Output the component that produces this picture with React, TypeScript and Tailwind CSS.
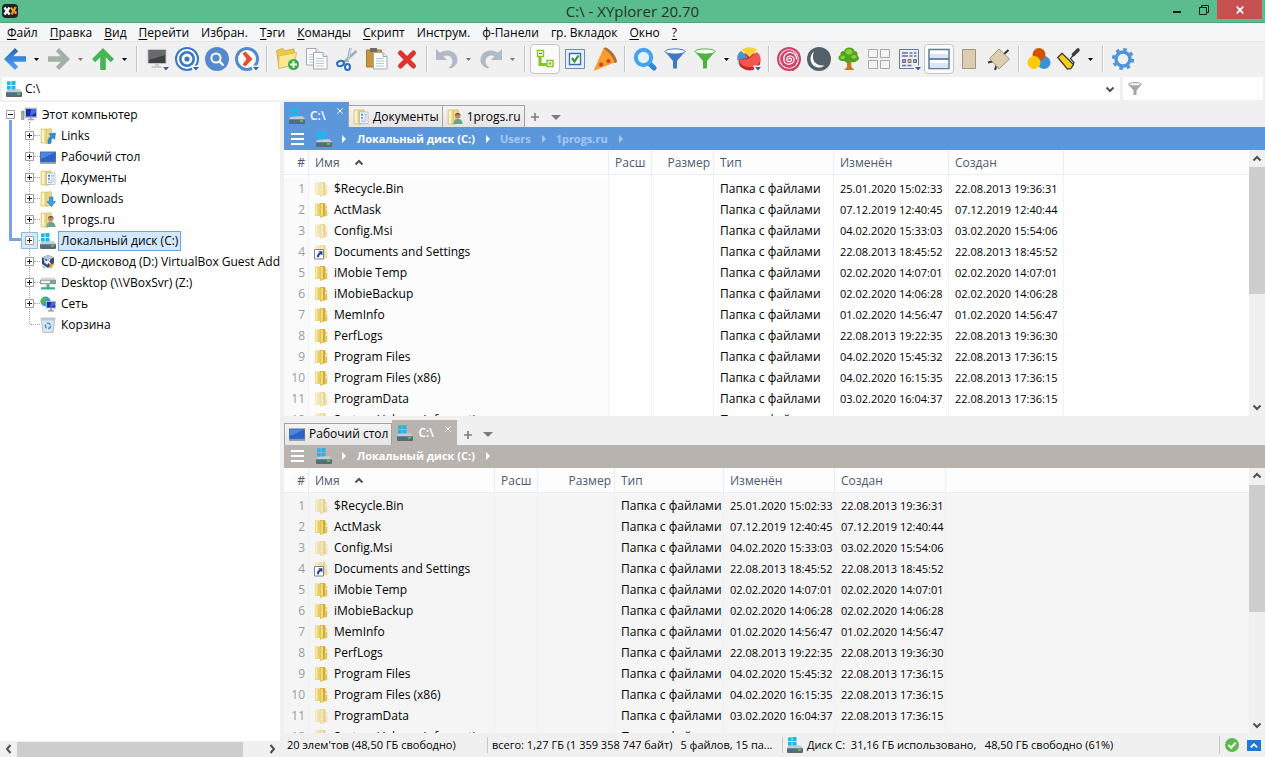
import { useState, type ReactNode } from 'react'
import clsx from 'clsx'

/* ------------------------------------------------------------------ */
/* Data                                                                */
/* ------------------------------------------------------------------ */

interface FileRow {
  name: string
  modified: string
  created: string
  kind?: 'dim' | 'link'
}

const files: FileRow[] = [
  { name: '$Recycle.Bin', modified: '25.01.2020 15:02:33', created: '22.08.2013 19:36:31', kind: 'dim' },
  { name: 'ActMask', modified: '07.12.2019 12:40:45', created: '07.12.2019 12:40:44' },
  { name: 'Config.Msi', modified: '04.02.2020 15:33:03', created: '03.02.2020 15:54:06', kind: 'dim' },
  { name: 'Documents and Settings', modified: '22.08.2013 18:45:52', created: '22.08.2013 18:45:52', kind: 'link' },
  { name: 'iMobie Temp', modified: '02.02.2020 14:07:01', created: '02.02.2020 14:07:01' },
  { name: 'iMobieBackup', modified: '02.02.2020 14:06:28', created: '02.02.2020 14:06:28' },
  { name: 'MemInfo', modified: '01.02.2020 14:56:47', created: '01.02.2020 14:56:47' },
  { name: 'PerfLogs', modified: '22.08.2013 19:22:35', created: '22.08.2013 19:36:30' },
  { name: 'Program Files', modified: '04.02.2020 15:45:32', created: '22.08.2013 17:36:15' },
  { name: 'Program Files (x86)', modified: '04.02.2020 16:15:35', created: '22.08.2013 17:36:15' },
  { name: 'ProgramData', modified: '03.02.2020 16:04:37', created: '22.08.2013 17:36:15', kind: 'dim' },
  { name: 'System Volume Information', modified: '04.02.2020 15:45:31', created: '20.11.2019 16:30:45', kind: 'dim' },
]

// [text before, underlined letter, text after]
const menu: [string, string, string][] = [
  ['', 'Ф', 'айл'],
  ['', 'П', 'равка'],
  ['', 'В', 'ид'],
  ['', 'П', 'ерейти'],
  ['Избран.', '', ''],
  ['', 'Т', 'эги'],
  ['', 'К', 'оманды'],
  ['', 'С', 'крипт'],
  ['Инструм.', '', ''],
  ['ф-Панели', '', ''],
  ['гр. Вкладок', '', ''],
  ['', 'О', 'кно'],
  ['', '?', ''],
]

/* ------------------------------------------------------------------ */
/* Small icons (16px)                                                  */
/* ------------------------------------------------------------------ */

function Svg16({ children }: { children: ReactNode }) {
  return (
    <svg viewBox="0 0 16 16" className="size-4 shrink-0" aria-hidden="true">
      {children}
    </svg>
  )
}

function FolderShape() {
  return (
    <>
      <path d="M1 1h6v14H1z" fill="#f0df98" stroke="#d6c070" strokeWidth=".6" />
      <path d="M6 1.500L10.500.500l1 1V14L6 15.800z" fill="#ead588" stroke="#d2b862" strokeWidth=".6" />
      <path d="M2 2h2v12H2z" fill="#fbf4cf" />
    </>
  )
}

function FolderIcon({ kind }: { kind?: 'dim' | 'link' }) {
  return (
    <Svg16>
      <g opacity={kind ? 0.5 : 1}>
        <path d="M1 1.500h5.500V14H1z" fill="#e9cd68" />
        <path d="M1.500 2h2v11.500h-2z" fill="#f8eaa4" />
        <path d="M6 1h4.500l1 1V14L6 15.700z" fill="#d3ad33" />
        <path d="M6.500 1.500h2.500v12.700l-2.500.9z" fill="#f1da7b" />
        <path d="M11.500 4l1.700.6V14l-1.700.4z" fill="#e2c14f" />
        <path d="M11.700 5.500l1 .3v2.200l-1-.2z" fill="#fff" />
      </g>
      {kind === 'link' && (
        <>
          <path d="M.5 5.500h9v9.500h-9z" fill="#fff" stroke="#7f8692" />
          <path d="M3 13.200c0-2.700 1-4 2.600-4.400L4.200 7.300h4.200v4.200L7 10.200c-1.400.3-2 1.300-2 3z" fill="#1d3f8e" />
        </>
      )}
    </Svg16>
  )
}

function DriveIcon() {
  return (
    <Svg16>
      <path d="M1 .6L4.700.2v4H1zM5.400.1L9.500 0v4.200H5.400zM1 4.900h3.700v3.900L1 8.500zM5.400 4.900h4.100v4.200l-4.100-.3z" fill="#1cb7ef" />
      <path d="M10 8.300h3.500L16 11H0l1.500-2z" fill="#c6ccd1" />
      <path d="M0 10.800h16v4.400q0 .8-1 .8H1q-1 0-1-.8z" fill="#5b6973" />
      <path d="M1 11.700h14v2.600H1z" fill="#4a7286" />
      <path d="M11 11.900h3v2h-3z" fill="#5fc248" />
      <path d="M0 10.600h16v.6H0z" fill="#eef1f3" />
    </Svg16>
  )
}

function ComputerIcon() {
  return (
    <Svg16>
      <path d="M.5 4h2.500v8.500H.5z" fill="#a7b0b4" stroke="#6f7a80" strokeWidth=".5" />
      <path d="M1 5h1.500v1H1z" fill="#49c43c" />
      <path d="M4 1h12v9.500H4z" fill="#c3c8d6" stroke="#8e95aa" strokeWidth=".5" />
      <path d="M5 2h10v7.500H5z" fill="#1a2ca8" />
      <path d="M10 2h5v3.500L9 9.500z" fill="#4a6be0" />
      <path d="M8.500 10.500h3V12h2v1.300H6.500V12h2z" fill="#a3abb8" />
    </Svg16>
  )
}

function LinksIcon() {
  return (
    <Svg16>
      <FolderShape />
      <path d="M8 15.500c-.6-4 .8-6.300 3-7.300L9 5.800l6.500-.8-.8 6.500-1.700-1.500c-2 .9-2.500 2.600-2 5.500z" fill="#2a8fd8" stroke="#1c6fb0" strokeWidth=".5" />
    </Svg16>
  )
}

function DesktopIcon() {
  return (
    <Svg16>
      <path d="M0 2.500h16v12H0z" fill="#5b6f8f" />
      <path d="M1 3.500h14v9H1z" fill="#2c62cc" />
      <path d="M1 3.500h14L1 10z" fill="#4f86e2" />
      <path d="M0 13h16v1.500H0z" fill="#8b98aa" />
    </Svg16>
  )
}

function DocsIcon() {
  return (
    <Svg16>
      <FolderShape />
      <path d="M6.500 3h8.500v11.500H6.500z" fill="#fdfdfd" stroke="#9fb0c4" strokeWidth=".7" />
      <path d="M8 4.800h2v2H8zM8 8h2v1.500H8z" fill="#4d87cd" />
      <path d="M11 5.300h3M11 7h3M11 9h3M8 11h6M8 12.700h5" stroke="#8aa0bb" strokeWidth=".7" />
    </Svg16>
  )
}

function DownloadsIcon() {
  return (
    <Svg16>
      <FolderShape />
      <path d="M9.500 6h3.500v4.500h2.500L11.300 15.700 7 10.500h2.500z" fill="#3fa0e6" stroke="#1f6fb8" strokeWidth=".6" />
    </Svg16>
  )
}

function UserFolderIcon() {
  return (
    <Svg16>
      <FolderShape />
      <circle cx="10.800" cy="6.800" r="2.700" fill="#b98a68" />
      <path d="M8 6.500c0-3.500 5.600-3.500 5.600 0-1-1.700-4-1.700-5.600 0z" fill="#5d4433" />
      <path d="M6.500 15c0-4 2-5 4.300-5s4.700 1 4.700 5z" fill="#6ca487" />
    </Svg16>
  )
}

function CdIcon() {
  return (
    <Svg16>
      <path d="M8 1l6 2.500V10L8 14 2 10V3.500z" fill="#2f4a7a" />
      <path d="M8 1l6 2.500L8 6.200 2 3.500z" fill="#b7c5dd" />
      <path d="M4 5.300l3 4.500 3-4.500M4.500 9l3-2 3 3" stroke="#fff" strokeWidth="1.200" fill="none" />
      <path d="M9.500 10c2 1 4-.2 4-2.500.8 3-.5 6-3.500 7.500z" fill="#e9a92b" />
      <path d="M1 11l3 3.500 2-1z" fill="#98a6ba" />
    </Svg16>
  )
}

function NetDriveIcon() {
  return (
    <Svg16>
      <path d="M1.500 2.500h13L16 5H0z" fill="#d7dbde" />
      <path d="M0 4.800h16v4.400H0z" fill="#8f979d" />
      <path d="M1 5.700h9v2.400H1z" fill="#eef1f2" />
      <path d="M12.500 5.800h2v2h-2z" fill="#57cc45" />
      <path d="M6.500 9.200h3v3h5.500v2.300H1v-2.300h5.500z" fill="#41b184" />
    </Svg16>
  )
}

function NetworkIcon() {
  return (
    <Svg16>
      <circle cx="5.500" cy="5.500" r="5" fill="#3b9be0" />
      <path d="M2 2.500c2-2 4-1.500 4.500 0S5 5 4.500 7 2 8 1 6.500s0-3 1-4zM7 6l3-2 .3 3-2 2z" fill="#52b848" />
      <path d="M6 5h10v7.500H6z" fill="#aab7d4" />
      <path d="M7 6h8v5.500H7z" fill="#1a2ca8" />
      <path d="M11 6h4v3l-5 2.500z" fill="#4868dc" />
      <path d="M10 12.500h2v1.700h2v1.300H8v-1.300h2z" fill="#8795ab" />
    </Svg16>
  )
}

function BinIcon() {
  return (
    <Svg16>
      <path d="M1 1h14l-2 14.500H3z" fill="#dbe4ec" stroke="#9badbd" strokeWidth=".7" />
      <path d="M1.500 1h13l-.4 2.500H2z" fill="#b9c8d4" />
      <circle cx="8" cy="8.800" r="2.600" fill="none" stroke="#4b8fd6" strokeWidth="1.500" strokeDasharray="4 1.400" />
    </Svg16>
  )
}

/* ------------------------------------------------------------------ */
/* Toolbar icons (24px)                                                */
/* ------------------------------------------------------------------ */

const dropMark = (
  <>
    <path d="M16 18.500h8V24h-6z" fill="#f3f3f3" />
    <path d="M18 20h6l-3 3.500z" fill="#33639e" />
  </>
)

const pageShape = (x: number, y: number) => (
  <g transform={`translate(${x} ${y})`}>
    <path d="M.5.500h9.500l4 4V17H.5z" fill="#fbfcfd" stroke="#a5a9ad" />
    <path d="M10 .5v4h4" fill="#e5e9ec" stroke="#a5a9ad" />
    <path d="M3 6.500h8M3 9h8M3 11.500h8M3 14h8" stroke="#b8c9da" />
  </g>
)

const toolIcons = {
  back: (
    <>
      <defs>
        <linearGradient id="backFill" x1="0" y1="0" x2="0" y2="1">
          <stop offset="0" stopColor="#2667bd" />
          <stop offset="1" stopColor="#4da8f8" />
        </linearGradient>
      </defs>
      <path d="M1 12L12 1l3.200 3.200-5 5H23v5.600H10.200l5 5L12 23z" fill="url(#backFill)" />
    </>
  ),
  forward: <path d="M23 12L12 1 8.800 4.200l5 5H1v5.600h12.800l-5 5L12 23z" fill="#a5b0a5" />,
  up: <path d="M12 1L1 12l3.200 3.200 5-5V23h5.600V10.200l5 5L23 12z" fill="#45b657" />,
  monitor: (
    <>
      <path d="M3 2.500h18v14H3z" fill="#3e4143" stroke="#c4c6c8" />
      <path d="M4 3h16v5L4 13z" fill="#686b6e" />
      <path d="M10 17h4v2h3.500v2h-11v-2H10z" fill="#c9cccf" />
      {dropMark}
    </>
  ),
  target: (
    <>
      <circle cx="12" cy="12" r="11" fill="#fff" stroke="#3a76c8" strokeWidth="2" />
      <circle cx="12" cy="12" r="6.700" fill="none" stroke="#3a76c8" strokeWidth="2.600" />
      <circle cx="12" cy="12" r="2.600" fill="#3a76c8" />
      {dropMark}
    </>
  ),
  search: (
    <>
      <circle cx="12" cy="12" r="12" fill="#5489cc" />
      <circle cx="11" cy="11" r="4.600" fill="none" stroke="#fff" strokeWidth="2" />
      <path d="M14.500 14.500l4 4" stroke="#fff" strokeWidth="2.400" />
    </>
  ),
  go: (
    <>
      <circle cx="12" cy="12" r="10.500" fill="#fff" stroke="#5489cc" strokeWidth="3" />
      <path d="M7.500 6.500L10.500 4.500 17.500 12l-7 7.500-3-2L11.500 12z" fill="#e8502b" />
      {dropMark}
    </>
  ),
  newFolder: (
    <>
      <path d="M1.500 3.500l6-2 2.500 2 9-1.500.5 4L21 17 4 21z" fill="#e9c94d" stroke="#cda437" strokeWidth=".8" />
      <path d="M4 9l17.500-3.500L19.500 18 3.500 21.500z" fill="#fbe98f" stroke="#d7b545" strokeWidth=".8" />
      <circle cx="18.500" cy="17.500" r="5.500" fill="#38ab45" />
      <path d="M18.500 14v7M15 17.500h7" stroke="#fff" strokeWidth="2" />
    </>
  ),
  copy: (
    <>
      {pageShape(1, 1)}
      {pageShape(8, 5)}
    </>
  ),
  cut: (
    <>
      <path d="M15.500 1l-3 14M21.500 4L8 16" stroke="#9fb0c0" strokeWidth="2.600" />
      <path d="M15.800 1.500l-2.500 12" stroke="#d5dfe8" strokeWidth="1" />
      <ellipse cx="5.500" cy="16.500" rx="3.500" ry="2.600" fill="none" stroke="#2e6bc4" strokeWidth="2" transform="rotate(-20 5.500 16.500)" />
      <ellipse cx="12.500" cy="20" rx="2.500" ry="3" fill="none" stroke="#2e6bc4" strokeWidth="2" />
    </>
  ),
  paste: (
    <>
      <path d="M1.500 3h15v17h-15z" fill="#c9963f" stroke="#a87a2c" />
      <path d="M5 1h7v4H5z" fill="#6f6c66" />
      {pageShape(8, 5)}
    </>
  ),
  remove: <path d="M5.500 6l13 13M18.500 6l-13 13" stroke="#dc3530" strokeWidth="5" strokeLinecap="round" />,
  undo: <path d="M1 2v11h11L8.500 9.300c4.500-2 9 .5 9 5.200 0 2.500-1.500 4.500-4 6l2 1c4.500-1.700 7-4.500 7-8.700C22.500 5 13 .500 5 5.800z" fill="#b0b9c5" />,
  redo: <path d="M23 2v11H12l3.500-3.700c-4.500-2-9 .5-9 5.200 0 2.500 1.500 4.500 4 6l-2 1c-4.500-1.700-7-4.500-7-8.700C1.500 5 11 .500 19 5.800z" fill="#b0b9c5" />,
  tree: (
    <>
      <path d="M7 10v7.500h6.500" stroke="#86c323" strokeWidth="3" fill="none" />
      <path d="M4.500 3.500h6v6h-6zM14 13.500h6v6h-6z" fill="#fff" stroke="#86c323" strokeWidth="1.400" />
      <path d="M6 6.500h3" stroke="#4f8f10" />
      <path d="M15.700 15.200h2.600v2.600h-2.600z" fill="#86c323" />
    </>
  ),
  check: (
    <>
      <path d="M2.500 2.500h19v19h-19z" fill="#e6eefa" stroke="#6f8ab5" />
      <path d="M6.500 6.500h11v11h-11z" fill="#fff" stroke="#3f6da8" strokeWidth="1.400" />
      <path d="M9 11l2.500 3.500 4-6" stroke="#2f9a35" strokeWidth="2.200" fill="none" />
    </>
  ),
  pizza: (
    <>
      <path d="M10.500 1.500c1-1.500 3-1 5 .5 4.500 3 7.500 7.500 8.500 12 0 2-2 2.500-3.500 1.500z" fill="#a9713a" />
      <path d="M10.500 1.500c5.500 3.500 9.500 8.500 11 14L.5 24z" fill="#fb9c2c" />
      <circle cx="8" cy="17.500" r="2" fill="#c5401c" />
      <circle cx="15.500" cy="14" r="2" fill="#c5401c" />
    </>
  ),
  magnifier: (
    <>
      <path d="M16 16l5 5" stroke="#2b86dc" strokeWidth="5" strokeLinecap="round" />
      <circle cx="10.500" cy="10.500" r="7.700" fill="#e3f2fd" stroke="#43a4f2" strokeWidth="4" />
    </>
  ),
  funnelBlue: (
    <>
      <path d="M1.500 4L10 14v7.500h4V14l8.500-10z" fill="#3f7bc4" />
      <ellipse cx="12" cy="4.500" rx="10" ry="2.600" fill="#fff" stroke="#3f7bc4" />
    </>
  ),
  funnelGreen: (
    <>
      <path d="M1.500 4L10 14v7.500h4V14l8.500-10z" fill="#4db53f" />
      <ellipse cx="12" cy="4.500" rx="10" ry="2.600" fill="#fff" stroke="#4db53f" />
    </>
  ),
  pie: (
    <>
      <ellipse cx="12.500" cy="14.500" rx="11" ry="9" fill="#c42a2a" />
      <path d="M2 13.500L12 11.500l7.500-6.500c4.500 2.500 5.500 8 2 12-5 5-17.500 4-19.500-3.500z" fill="#f25552" />
      <path d="M11 10.500L.5 13.500C-.5 9 1 5.500 4.500 4z" fill="#4c94cf" />
      <path d="M12.500 10L4.500 2.800C9-.7 16-.7 20.500 2.800z" fill="#fad23a" />
      {dropMark}
    </>
  ),
  spiral: (
    <>
      <circle cx="12" cy="12" r="12" fill="#cd4468" />
      <circle cx="12" cy="12" r="9.800" fill="#fff" />
      <circle cx="12" cy="12" r="8.900" fill="#cd4468" />
      <path
        d="M12 12.500c-.8-1.800 2.500-2 2.500.3 0 2.500-4.700 2.800-4.700-.8 0-4.200 7.200-4 7.200.8 0 5-8.500 6-10 1C5.500 8.500 10 5 13.500 5.300c3.500.3 6.500 3.200 6 7.200"
        fill="none"
        stroke="#fff"
        strokeWidth="1.200"
      />
      <path d="M15 23.500c3-1.500 5-3 6.500-6" stroke="#cd4468" strokeWidth="2" fill="none" />
    </>
  ),
  moon: (
    <>
      <circle cx="12" cy="12" r="12" fill="#545f6c" />
      <path d="M7 4.500C2.500 8 2.500 15 6.500 18.500c3.500 3 8.500 2.700 11-.2-3.500.7-7-.1-9.500-2.800S5.500 8.500 7 4.500z" fill="#fff" />
    </>
  ),
  oak: (
    <>
      <path d="M10 12h4l.5 8 3 3H7l3-3z" fill="#c37a28" />
      <path d="M12 .5c3.500 0 5 1.500 5.500 3.500 3 .3 3.500 3 3 4.500 2 1.500 2 5-1 5.500-2 2-5 1.500-6 .5-2 2-5 1.500-6-.5C4 14.500 1 13 1.500 10.500c.2-1.500 1-2 2-2.500-.500-2.500 1-4 3.500-4C8 1.500 10 .5 12 .5z" fill="#4fa41c" />
      <path d="M12 2c2 0 3.500 1 3.500 3S14 7.500 12 7.500 8.500 7 8.500 5 10 2 12 2zM5.500 8.500c2 0 3 1 2.500 2.500s-4.500 1.500-4.500 0 .5-2.500 2-2.500zM16.500 8c2 0 3.500.8 3 2.300s-5 1.700-5 .2.500-2.500 2-2.500z" fill="#88cf3c" />
    </>
  ),
  grid: (
    <path d="M1.500 2.500h9v8h-9zM13.500 2.500h9v8h-9zM1.500 13.500h9v8h-9zM13.500 13.500h9v8h-9z" fill="#f3f3f3" stroke="#a9a9a9" />
  ),
  panel: (
    <>
      <path d="M2.500 2.500h19v19h-19z" fill="#eceff7" stroke="#68799c" />
      <path d="M5 6h6M12.500 6h3M17 6h2.500M5 9h6M12.500 9h3M17 9h2.500" stroke="#66738f" strokeWidth="1.700" />
      <path d="M5.500 12.500h3v3h-3z" fill="#d77fc8" stroke="#66738f" />
      <path d="M11 12.500h3v3h-3z" fill="#f3c832" stroke="#66738f" />
      <path d="M16.500 12.500h3v3h-3z" fill="#7cc957" stroke="#66738f" />
      <path d="M5 18.500h4M10.500 18.500h4" stroke="#66738f" strokeWidth="1.700" />
      {dropMark}
    </>
  ),
  split: (
    <>
      <path d="M2 2.500h20v19H2z" fill="#fff" stroke="#66789f" strokeWidth="1.500" />
      <path d="M3 7h18v4.500H3zM3 16h18v5H3z" fill="#d9e6f9" />
      <path d="M2 12h20" stroke="#61759f" strokeWidth="1.800" />
    </>
  ),
  card: <path d="M5.500 2.500h13v19h-13z" fill="#dccdaf" stroke="#a2937a" />,
  pin: (
    <>
      <path d="M16 8l5.500-5M7 14l-6 1.500M10 17l-2 6" stroke="#333" strokeWidth="2" />
      <path d="M12 2L22.500 12 12 22 2.500 11.500z" fill="#dccdaf" stroke="#a2937a" />
    </>
  ),
  balls: (
    <>
      <circle cx="17" cy="15.500" r="6.500" fill="#3794dc" />
      <circle cx="12" cy="7.500" r="6.500" fill="#d35400" />
      <circle cx="7" cy="15.500" r="6.500" fill="#fdcb09" />
    </>
  ),
  brush: (
    <>
      <path d="M21 3l-4.500 4.500" stroke="#3c3c3c" strokeWidth="3.600" strokeLinecap="round" />
      <path d="M16.500 8l-3 3.500 3.500 4-2 4.500" stroke="#3c3c3c" strokeWidth="1.200" fill="none" />
      <path d="M.8 10.500L5 6.300l11.500 11.200-2.800 4.200-3.200.5z" fill="#fbcf14" stroke="#3c3c3c" strokeWidth="1.300" strokeLinejoin="round" />
    </>
  ),
  gear: (
    <>
      <circle cx="12" cy="12" r="7" fill="none" stroke="#4f94d8" strokeWidth="3.400" />
      <circle cx="12" cy="12" r="9.700" fill="none" stroke="#4f94d8" strokeWidth="2.800" strokeDasharray="3.600 4.018" />
    </>
  ),
}

type ToolName = keyof typeof toolIcons
type ToolItem = ToolName | 'sep' | 'caret' | 'caretDim'

const toolbar: ToolItem[] = [
  'back', 'caret', 'forward', 'caretDim', 'up', 'caret', 'sep',
  'monitor', 'target', 'search', 'go', 'sep',
  'newFolder', 'copy', 'cut', 'paste', 'remove', 'sep',
  'undo', 'caretDim', 'redo', 'caretDim', 'sep',
  'tree', 'check', 'pizza', 'sep',
  'magnifier', 'funnelBlue', 'funnelGreen', 'caret', 'pie', 'sep',
  'spiral', 'moon', 'oak', 'grid', 'panel', 'split', 'card', 'pin', 'sep',
  'balls', 'brush', 'caret', 'sep',
  'gear',
]

function Toolbar() {
  const [pressed, setPressed] = useState<ToolName[]>(['tree', 'split'])

  const toggle = (name: ToolName) =>
    setPressed((p) => (p.includes(name) ? p.filter((n) => n !== name) : [...p, name]))

  return (
    <div className="flex h-[35px] shrink-0 items-center overflow-hidden pb-px" role="toolbar">
      {toolbar.map((item, i) => {
        if (item === 'sep') {
          return <span key={i} className="mx-1 h-[26px] w-0.5 shrink-0 border-x border-r-white border-l-[#c3c3c3]" />
        }
        if (item === 'caret' || item === 'caretDim') {
          return (
            <button key={i} aria-label="Показать список" className="flex h-[30px] w-3.5 shrink-0 items-center justify-center pr-0.5">
              <Caret className={item === 'caret' ? 'fill-black' : 'fill-[#777]'} />
            </button>
          )
        }
        return (
          <button
            key={i}
            aria-label={item}
            onClick={() => (item === 'tree' || item === 'split') && toggle(item)}
            className={clsx(
              'flex size-[30px] shrink-0 items-center justify-center rounded border',
              pressed.includes(item) ? 'border-[#c6c6c6] bg-[#fbfbfb]' : 'border-transparent'
            )}
          >
            <svg viewBox="0 0 24 24" className="size-6 shrink-0" aria-hidden="true">
              {toolIcons[item]}
            </svg>
          </button>
        )
      })}
    </div>
  )
}

/* ------------------------------------------------------------------ */
/* Shared bits                                                         */
/* ------------------------------------------------------------------ */

function Caret({ className }: { className?: string }) {
  return (
    <svg viewBox="0 0 5 3" className={clsx('h-[3px] w-[5px]', className)} aria-hidden="true">
      <path d="M0 0h5L2.500 3z" />
    </svg>
  )
}

function Chevron({ dir }: { dir: 'up' | 'down' | 'left' | 'right' }) {
  const d = {
    up: 'M1.500 6.500L5 3l3.500 3.500',
    down: 'M1.500 3.500L5 7l3.500-3.500',
    left: 'M6.500 1L3 5l3.500 4',
    right: 'M3.500 1L7 5 3.500 9',
  }[dir]
  return (
    <svg viewBox="0 0 10 10" className="size-2.5 shrink-0" aria-hidden="true">
      <path d={d} fill="none" stroke="#505050" strokeWidth="2" />
    </svg>
  )
}

function VerticalScrollbar() {
  return (
    <div className="flex w-4 shrink-0 flex-col bg-[#f0f0f0]">
      <button aria-label="Вверх" className="flex h-[17px] items-center justify-center">
        <Chevron dir="up" />
      </button>
      <div className="flex-1">
        <div className="h-[55%] bg-[#cdcdcd]" />
      </div>
      <button aria-label="Вниз" className="flex h-[17px] items-center justify-center">
        <Chevron dir="down" />
      </button>
    </div>
  )
}

/* ------------------------------------------------------------------ */
/* Window chrome                                                       */
/* ------------------------------------------------------------------ */

function TitleBar() {
  return (
    <header className="grid h-[23px] shrink-0 grid-cols-[1fr_auto_1fr] border-b border-[#4da57a] bg-[#5bbd8d]">
      <div className="flex items-center pl-0.5">
        <svg viewBox="0 0 16 16" className="size-4" aria-hidden="true">
          <rect y="1" width="16" height="14" rx="4" fill="#222" />
          <path d="M2.500 4.500l5 7M7.500 4.500l-5 7" stroke="#fff" strokeWidth="2.400" />
          <path d="M9 4.500l2.200 3.500M13.800 4L9.500 11.500M13.500 8v3" stroke="#f39b23" strokeWidth="2.200" />
        </svg>
      </div>
      <h1 className="text-[15px] leading-[22px] text-[#24352c]">C:\ - XYplorer 20.70</h1>
      <div className="flex items-start justify-end pr-[3px]">
        <button aria-label="Свернуть" className="flex h-[19px] w-[26px] items-end justify-center pb-1.5">
          <span className="h-0.5 w-2 bg-[#1c1c1c]" />
        </button>
        <button aria-label="Восстановить" className="flex h-[19px] w-[27px] items-center justify-center">
          <svg viewBox="0 0 10 10" width="10" height="10" aria-hidden="true">
            <path d="M2.500 2V.5h7v7H8M.5 2.500h7v7h-7z" fill="none" stroke="#1c1c1c" />
          </svg>
        </button>
        <button aria-label="Закрыть" className="flex h-[19px] w-[45px] items-center justify-center bg-[#c75050]">
          <svg viewBox="0 0 8 8" width="8" height="8" aria-hidden="true">
            <path d="M.7.7l6.600 6.600M7.300.7L.7 7.300" stroke="#fff" strokeWidth="1.700" />
          </svg>
        </button>
      </div>
    </header>
  )
}

function MenuBar() {
  return (
    <nav className="flex h-[19px] shrink-0 items-end border-b border-[#e4e5e6] bg-[#f5f6f7] pl-px">
      {menu.map(([before, key, after], i) => (
        <button key={i} className="px-1.5 leading-4 whitespace-nowrap">
          {before}
          <span className="underline underline-offset-2">{key}</span>
          {after}
        </button>
      ))}
    </nav>
  )
}

function AddressBar() {
  return (
    <div className="flex h-[23px] shrink-0 gap-[3px] px-0.5">
      <div className="flex flex-1 items-center gap-[3px] bg-white pr-[5px] pl-1">
        <DriveIcon />
        <input aria-label="Адрес" defaultValue="C:\" className="min-w-0 flex-1 bg-transparent outline-none" />
        <button aria-label="История">
          <Chevron dir="down" />
        </button>
      </div>
      <div className="flex w-[140px] items-center gap-1 bg-white px-[5px]">
        <svg viewBox="0 0 14 14" className="size-3.5 shrink-0" aria-hidden="true">
          <path d="M0 2l5.500 6.500V13h3V8.500L14 2z" fill="#a6a6a6" />
          <ellipse cx="7" cy="2.200" rx="6.500" ry="1.700" fill="#eee" stroke="#a6a6a6" />
        </svg>
        <input aria-label="Фильтр" className="w-full min-w-0 bg-transparent outline-none" />
      </div>
    </div>
  )
}

/* ------------------------------------------------------------------ */
/* Folder tree                                                         */
/* ------------------------------------------------------------------ */

interface TreeNode {
  label: string
  icon: ReactNode
  leaf?: boolean
  selected?: boolean
}

const treeNodes: TreeNode[] = [
  { label: 'Links', icon: <LinksIcon /> },
  { label: 'Рабочий стол', icon: <DesktopIcon /> },
  { label: 'Документы', icon: <DocsIcon /> },
  { label: 'Downloads', icon: <DownloadsIcon /> },
  { label: '1progs.ru', icon: <UserFolderIcon /> },
  { label: 'Локальный диск (C:)', icon: <DriveIcon />, selected: true },
  { label: 'CD-дисковод (D:) VirtualBox Guest Additions', icon: <CdIcon /> },
  { label: 'Desktop (\\\\VBoxSvr) (Z:)', icon: <NetDriveIcon /> },
  { label: 'Сеть', icon: <NetworkIcon /> },
  { label: 'Корзина', icon: <BinIcon />, leaf: true },
]

function Expander({ open, active }: { open?: boolean; active?: boolean }) {
  return (
    <button
      aria-label={open ? 'Свернуть' : 'Развернуть'}
      className={clsx(
        'z-10 -m-1 flex size-[17px] shrink-0 items-center justify-center border',
        active ? 'border-[#8fbbe9] bg-[#d6e8fb]' : 'border-transparent'
      )}
    >
      <svg viewBox="0 0 9 9" width="9" height="9" aria-hidden="true">
        <path d="M.5.5h8v8h-8z" fill="#fff" stroke="#a0a0a0" />
        <path d={open ? 'M2 4.500h5' : 'M2 4.500h5M4.500 2v5'} stroke="#222" />
      </svg>
    </button>
  )
}

function FolderTree() {
  return (
    <aside className="flex w-[280px] shrink-0 flex-col">
      <div className="relative flex-1 overflow-hidden bg-white pt-0.5">
        {/* guide lines */}
        <span className="absolute top-[20px] left-[29px] h-[202px] border-l border-dotted border-[#a8a8a8]" />
        <span className="absolute top-[18px] left-[9px] h-[121px] w-3 border-b-[3px] border-l-[3px] border-[#78a5db]" />
        <div className="flex h-[21px] items-center pl-1.5">
          <Expander open />
          <span className="w-1.5 shrink-0" />
          <ComputerIcon />
          <span className="ml-0.5 px-[3px]">Этот компьютер</span>
        </div>
        <ul>
          {treeNodes.map((node) => (
            <li key={node.label} className="flex h-[21px] items-center pl-[25px]">
              {node.leaf ? <span className="w-[9px] shrink-0" /> : <Expander active={node.selected} />}
              <span className={clsx('shrink-0 border-t border-dotted border-[#a8a8a8]', node.leaf ? '-ml-1 w-2.5' : 'w-1.5')} />
              {node.icon}
              <span
                className={clsx(
                  'ml-0.5 border px-0.5 leading-[18px] whitespace-nowrap',
                  node.selected ? 'border-[#66a7e8] bg-[#d1e8ff]' : 'border-transparent'
                )}
              >
                {node.label}
              </span>
            </li>
          ))}
        </ul>
      </div>
      <div className="flex h-4 items-center bg-[#f0f0f0]">
        <button aria-label="Влево" className="flex w-[17px] justify-center">
          <Chevron dir="left" />
        </button>
        <div className="h-[15px] flex-1">
          <div className="h-full w-[92%] bg-[#cdcdcd]" />
        </div>
        <button aria-label="Вправо" className="flex w-[17px] justify-center">
          <Chevron dir="right" />
        </button>
      </div>
    </aside>
  )
}

/* ------------------------------------------------------------------ */
/* File panes                                                          */
/* ------------------------------------------------------------------ */

interface Tab {
  label: string
  icon: ReactNode
  active?: boolean
}

interface PaneProps {
  tabs: Tab[]
  focused?: boolean
  trail: string[]
  widths: number[]
}

const columns = ['#', 'Имя', 'Расш', 'Размер', 'Тип', 'Изменён', 'Создан']

function TabStrip({ tabs, focused }: { tabs: Tab[]; focused?: boolean }) {
  return (
    <div className="flex h-[25px] shrink-0 items-end">
      {tabs.map((tab) =>
        tab.active ? (
          <div
            key={tab.label}
            className={clsx('flex h-[25px] w-[65px] pl-[5px] font-semibold text-white', focused ? 'bg-[#5c97dc]' : 'bg-[#b8b3af]')}
          >
            <button className="flex flex-1 items-center gap-[5px] pt-0.5">
              {tab.icon}
              {tab.label}
            </button>
            <button aria-label="Закрыть вкладку" className="self-start px-1.5 pt-1.5">
              <svg viewBox="0 0 6 6" width="6" height="6" aria-hidden="true">
                <path d="M.3.3l5.400 5.400M5.700.3L.3 5.700" stroke="#fff" />
              </svg>
            </button>
          </div>
        ) : (
          <button
            key={tab.label}
            className="flex h-[22px] items-center gap-1 border border-b-0 border-[#a3a3a3] bg-linear-to-b from-[#f4f4f4] to-[#e4e4e4] pr-[3px] pl-1 not-first:-ml-px"
          >
            {tab.icon}
            {tab.label}
          </button>
        )
      )}
      <button aria-label="Новая вкладка" className="flex h-5 w-[21px] items-center justify-center">
        <svg viewBox="0 0 8 8" width="8" height="8" aria-hidden="true">
          <path d="M4 0v8M0 4h8" stroke="#7c7c7c" strokeWidth="1.600" />
        </svg>
      </button>
      <button aria-label="Список вкладок" className="flex h-5 w-5 items-center justify-center">
        <svg viewBox="0 0 10 5" width="10" height="5" aria-hidden="true">
          <path d="M0 0h10L5 5z" fill="#7c7c7c" />
        </svg>
      </button>
    </div>
  )
}

function Breadcrumb({ trail, focused }: { trail: string[]; focused?: boolean }) {
  return (
    <div
      className={clsx(
        'flex h-[23px] shrink-0 items-center gap-2.5 pl-[7px] text-[11px] font-bold text-white',
        focused ? 'bg-[#5c97dc]' : 'bg-[#b8b3af]'
      )}
    >
      <button aria-label="Меню" className="mr-0.5 flex w-[13px] flex-col gap-[3px]">
        <span className="h-0.5 bg-white" />
        <span className="h-0.5 bg-white" />
        <span className="h-0.5 bg-white" />
      </button>
      <DriveIcon />
      {trail.map((part, i) => (
        <span key={part} className={clsx('flex items-center gap-[11px]', i > 0 && 'text-[#a5c8f2]')}>
          {i === 0 && <CrumbArrow />}
          <a href="#" className="whitespace-nowrap">{part}</a>
          <CrumbArrow />
        </span>
      ))}
    </div>
  )
}

function CrumbArrow() {
  return (
    <svg viewBox="0 0 4 8" width="4" height="8" className="shrink-0" aria-hidden="true">
      <path d="M0 0l4 4-4 4z" fill="currentColor" />
    </svg>
  )
}

function Pane({ tabs, focused, trail, widths }: PaneProps) {
  const line = focused ? 'border-r border-[#f1f4f7]' : 'border-r border-[#eef0f2]'

  return (
    <section className="flex min-h-0 flex-1 flex-col">
      <TabStrip tabs={tabs} focused={focused} />
      <Breadcrumb trail={trail} focused={focused} />
      <div className={clsx('flex min-h-0 flex-1', focused ? 'bg-white' : 'bg-[#f5f5f5]')}>
        <div className="min-w-0 flex-1 overflow-hidden">
          <table className="w-full table-fixed border-separate border-spacing-0">
            <colgroup>
              {widths.map((w, i) => (
                <col key={i} style={{ width: w }} />
              ))}
              <col />
            </colgroup>
            <thead>
              <tr className="h-[25px] bg-[#fdfdfd] text-left text-[#4c5a70]">
                {columns.map((name) => (
                  <th
                    key={name}
                    className={clsx(
                      'border-r border-b border-[#e4edf8] px-0 pt-0.5 pb-0 font-normal whitespace-nowrap',
                      name === '#' || name === 'Размер' ? 'pr-[3px] text-right' : 'pl-1.5'
                    )}
                  >
                    {name === 'Имя' ? (
                      <span className="flex items-center gap-3.5">
                        {name}
                        <Chevron dir="up" />
                      </span>
                    ) : (
                      name
                    )}
                  </th>
                ))}
                <th className="border-b border-[#e4edf8] p-0" />
              </tr>
            </thead>
            <tbody>
              <tr className="h-[3px]" aria-hidden="true">
                {columns.map((name) => (
                  <td key={name} className={clsx(line, 'p-0')} />
                ))}
                <td className="p-0" />
              </tr>
              {files.map((file, i) => (
                <tr key={file.name} className="h-[21px] whitespace-nowrap">
                  <td className={clsx(line, 'p-0 pr-[3px] text-right text-[#9a9a9a]', focused && 'bg-[#fafafa]')}>{i + 1}</td>
                  <td className={clsx(line, 'p-0 pl-[5px]', focused && 'bg-[#fcfcfc]')}>
                    <span className="flex items-center gap-1">
                      <FolderIcon kind={file.kind} />
                      {file.name}
                    </span>
                  </td>
                  <td className={clsx(line, 'p-0')} />
                  <td className={clsx(line, 'p-0')} />
                  <td className={clsx(line, 'p-0 pl-1.5')}>Папка с файлами</td>
                  <td className={clsx(line, 'p-0 pl-1.5 text-[11px]')}>{file.modified}</td>
                  <td className={clsx(line, 'p-0 pl-1.5 text-[11px]')}>{file.created}</td>
                  <td className="p-0" />
                </tr>
              ))}
            </tbody>
          </table>
        </div>
        <VerticalScrollbar />
      </div>
    </section>
  )
}

/* ------------------------------------------------------------------ */
/* Status bar                                                          */
/* ------------------------------------------------------------------ */

function StatusBar() {
  return (
    <footer className="grid h-6 shrink-0 grid-cols-[203px_295px_1fr_auto] items-center text-[11px] whitespace-nowrap">
      <span className="pl-[3px]">20 элем'тов (48,50 ГБ свободно)</span>
      <span className="flex gap-2 border-l border-[#c8c8c8] pl-1">
        <span>всего: 1,27 ГБ (1 359 358 747 байт)</span>
        <span>5 файлов, 15 па...</span>
      </span>
      <span className="flex items-center gap-1 border-l border-[#c8c8c8] pl-1">
        <DriveIcon />
        <span>Диск C:&nbsp; 31,16 ГБ использовано, &nbsp; 48,50 ГБ свободно (61%)</span>
      </span>
      <span className="flex h-[18px] items-center gap-2 border-l border-[#c8c8c8] pr-1 pl-[5px]">
        <svg viewBox="0 0 14 14" width="14" height="14" aria-hidden="true">
          <circle cx="7" cy="7" r="7" fill="#5cb94b" />
          <path d="M3.500 7l2.700 2.700 4.500-5" stroke="#fff" strokeWidth="2" fill="none" />
        </svg>
        <button aria-label="Панель информации" className="flex h-[11px] w-3.5 items-center justify-center bg-[#1f78d1]">
          <svg viewBox="0 0 8 5" width="8" height="5" aria-hidden="true">
            <path d="M.8 4.300L4 1.200l3.200 3.100" stroke="#fff" strokeWidth="1.800" fill="none" />
          </svg>
        </button>
      </span>
    </footer>
  )
}

export default function App() {
  return (
    <div className="flex h-screen flex-col overflow-hidden bg-[#f0f0f0] font-['Open_Sans','Noto_Sans',sans-serif] text-[12px] leading-4 text-black">
      <TitleBar />
      <MenuBar />
      <Toolbar />
      <AddressBar />
      <main className="flex min-h-0 flex-1 gap-1 pt-0.5">
        <FolderTree />
        <div className="flex min-w-0 flex-1 flex-col">
          <div className="flex min-h-0 flex-1 flex-col gap-1">
            <Pane
              focused
              tabs={[
                { label: 'C:\\', icon: <DriveIcon />, active: true },
                { label: 'Документы', icon: <DocsIcon /> },
                { label: '1progs.ru', icon: <UserFolderIcon /> },
              ]}
              trail={['Локальный диск (C:)', 'Users', '1progs.ru']}
              widths={[25, 300, 43, 62, 120, 115, 115]}
            />
            <Pane
              tabs={[
                { label: 'Рабочий стол', icon: <DesktopIcon /> },
                { label: 'C:\\', icon: <DriveIcon />, active: true },
              ]}
              trail={['Локальный диск (C:)']}
              widths={[25, 186, 43, 77, 109, 111, 111]}
            />
          </div>
          <StatusBar />
        </div>
      </main>
    </div>
  )
}
